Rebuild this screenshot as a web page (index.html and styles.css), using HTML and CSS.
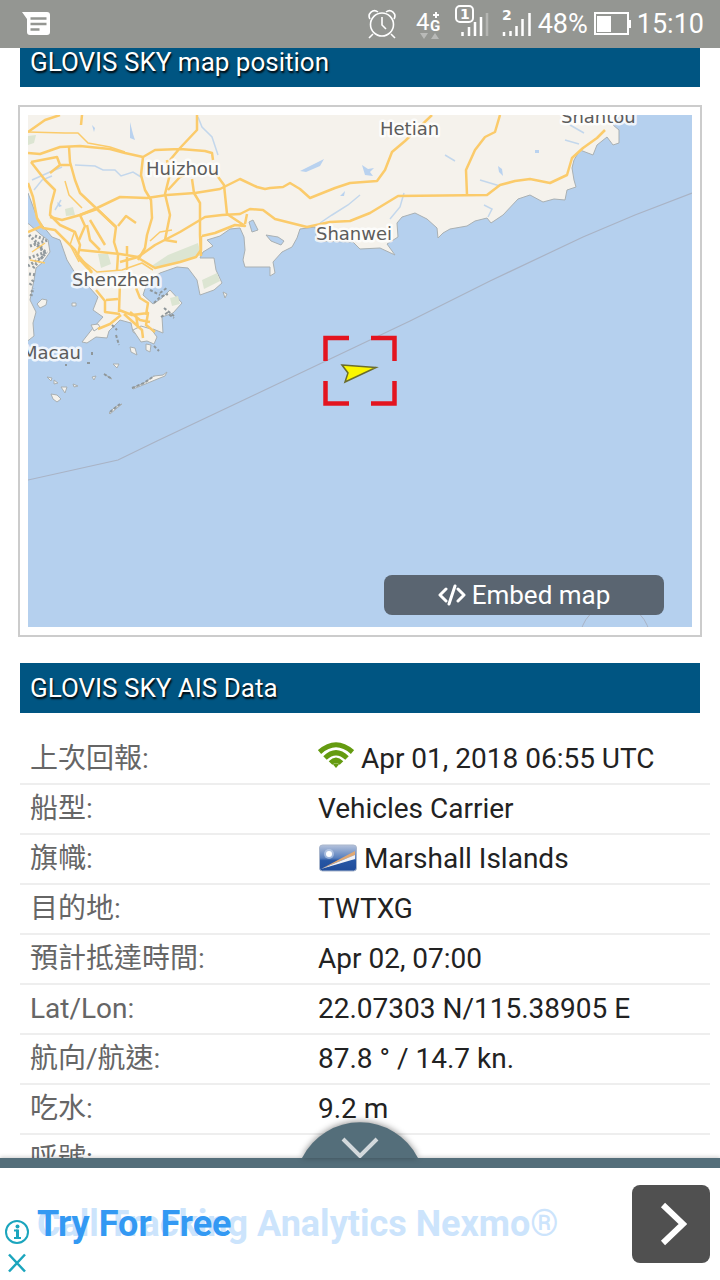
FILE: index.html
```html
<!DOCTYPE html>
<html lang="zh-Hant">
<head>
  <meta charset="UTF-8" />
  <meta name="viewport" content="width=device-width, initial-scale=1.0"/>
  <title>GLOVIS SKY</title>
  <link rel="stylesheet" href="styles.css">
</head>
<body>
  <header class="status-bar">
    <svg class="msg-icon" width="30" height="24" viewBox="0 0 30 24">
      <path d="M0 0h25q3 0 3 3v17q0 3-3 3H8q-3 0-3-3V7z" fill="#fff"/>
      <path d="M8.500 6.500h16M8.500 12h16M8.500 17.500h9" stroke="#949692" stroke-width="2.600"/>
    </svg>
    <svg class="alarm-icon" width="28" height="30" viewBox="0 0 28 30" fill="none" stroke="#fff" stroke-width="1.600">
      <circle cx="14" cy="15.500" r="11.500"/>
      <path d="M14 8v8l4 4M5 25l-4 4M23 25l4 4"/>
      <path d="M2 10C-1 5 5-1 10 3M26 10c3-5-3-11-8-7"/>
    </svg>
    <svg class="net-icon" width="28" height="32" viewBox="0 0 28 32">
      <text x="0" y="22" font-size="24" fill="#fff">4</text>
      <text x="14" y="23" font-size="15" font-weight="700" fill="#fff">G</text>
      <path d="M20 4v6M17 7h6" stroke="#fff" stroke-width="2"/>
      <path d="M4 25h8l-4 6zM15 31h8l-4-6z" fill="#b9bab8"/>
    </svg>
    <svg class="sim1-icon" width="34" height="34" viewBox="0 0 34 34">
      <rect x="1" y="2" width="17" height="16" rx="4" fill="none" stroke="#fff" stroke-width="2"/>
      <text x="5" y="15" font-size="14" font-weight="700" class="sim-no">1</text>
      <path d="M7.500 32v-4M14 32v-9M20 32V18M26 32V13" stroke="#fff" stroke-width="2.500"/>
      <path d="M32 32V9" stroke="#b4b5b2" stroke-width="2.500"/>
    </svg>
    <svg class="sim2-icon" width="30" height="34" viewBox="0 0 30 34">
      <text x="0" y="16" font-size="14" font-weight="700" class="sim-no">2</text>
      <path d="M2 32v-4M8.500 32v-5M14.500 32V22M20.500 32V15M27.500 32V9" stroke="#fff" stroke-width="2.500"/>
    </svg>
    <span class="percent">48%</span>
    <svg class="battery-icon" width="37" height="24" viewBox="0 0 37 24">
      <rect x="1" y="1" width="33" height="21" fill="none" stroke="#fff" stroke-width="2"/>
      <path d="M3 4h14v16H3zM34 8h3v8h-3z" fill="#fff"/>
    </svg>
    <span>15:10</span>
  </header>

  <main class="content">
    <h2 class="section-title first">GLOVIS SKY map position</h2>

    <div class="map-frame">
      <svg class="map" viewBox="28 115 664 512">
        <rect x="28" y="115" width="664" height="512" fill="#b5d0ee"/>

        <!-- land -->
        <g fill="#f5f2ec" stroke="#a9b0b3" stroke-width="1">
          <path d="M20 100H632L613 125L619 130L619 143L613 145L607 137L597 145L593 155L580 150L574 160L572 168L574 180L576 187L567 190L565 200L554 199L543 202L530 195L518 199L503 215L491 223L487 218L475 221L467 226L450 229L443 233L438 238L437 228L427 219L415 213L402 217L397 223L398 237L387 244L395 255L380 248L360 249L353 242L317 241L315 227L300 229L297 238L292 247L282 252L273 262L275 273L270 276L270 267L245 267L243 260L245 250L244 237L240 228L230 229L220 236L207 240L213 246L203 252L200 258L214 258L216 270L222 283L214 290L200 295L197 280L188 268L177 267L160 273L147 283L143 295L153 304L162 298L170 290L182 303L173 313L162 317L163 333L153 329L155 340L143 338L133 332L131 323L120 320L109 331L107 338L96 337L87 343L82 342L93 328L103 317L93 310L98 297L90 288L75 273L67 260L60 240L52 237L38 220L28 193H20Z"/>
          <path d="M20 221L29 224L40 234L48 240L50 252L43 262L36 268L34 280L30 300L36 312L33 323L34 336L25 343Z"/>
          <path d="M133 330l8-4 10 3 6 8-3 7-7-3-6 1zM91 325l7-1 2 3-6 4zM37 304l5-5 5 1-1 5-6 3zM72 303h4v3h-4zM223 292l4 2-2 4zM113 364l6 0-2 4zM146 344l5 1-1 7-4-2z"/>
          <path d="M47 377l5 1-1 3zM54 380l4 3-4 1zM61 387l6 0-2 6zM73 384l5 2-4 1zM51 394l6 1 4 4-4 3-4-3zM92 377l4-1-2 4zM104 374l8 5zM130 347l5 1 2 7-6-3z"/>
          <path d="M132 388l12-5 10-7 9-1 4-3-2 4-10 4-12 5-10 4zM109 413l6-6 7-3-5 4-7 6z"/>
        </g>
        <g fill="#b5d0ee" stroke="#a9b0b3" stroke-width="1">
          <path d="M266 235l12 2 6 4-3 4-10-4zM249 222l4-2 5 10-6 2z"/>
        </g>
        <g fill="#dce5d2">
          <path d="M153 265l15-10 30-12 3 12-18 7-30 6zM98 254l10 0 3 10-10 4zM28 136l8-1-2 8-6 2zM65 209l8-2 2 8-9 1zM202 280l15-7 3 8-16 8zM170 298l8-2 2 8-8 2z"/>
        </g>
        <!-- tidal flats west of the estuary -->
        <path d="M29 235l14 14M30 246l18-6M29 258l17-6M33 268l12-14M29 274l7 1M30 285l4-6M35 236l9 3M31 296l2-8M34 243l13 10M28 266l16-10M38 246l8 8" stroke="#929a9e" stroke-width="3" stroke-dasharray="2 2" fill="none"/>
        <path d="M160 293l8-6M150 290l10 5M161 317l6-4 7 5M112 325l5 5M116 335l3 10M92 352v4M87 363h4M154 346l5 5M65 365h2M132 388l12-5 10-7M154 303l6-6 8-3M164 308l10 8M104 374l8 5M110 412l10-8" stroke="#8f979b" stroke-width="2" stroke-dasharray="3 2" fill="none"/>

        <!-- rivers and lakes -->
        <g fill="none" stroke="#c3d7ec" stroke-width="1.500">
          <path d="M198 117l4 10 10 10 6 18M75 165l20 1 8 4 12 0 6 6 12-4 8 5M32 180l18-8 12-5M34 190l8-10 10-4M55 210l6-10M390 219l10-12 4-14M320 223l12-8 16-10 12-10M445 155l10 6M484 205l8 4-4 8M565 140l14 4M480 180l20 6M570 125l14 8"/>
        </g>
        <path d="M130 122l3 12 2 6-5-2zM92 125l3 3-1 4zM300 171l14-7 10-5-4 7-14 6zM362 165l6 4 6-1-4 4 3 4-8-1zM340 196l5-5-1 5zM498 166l4 3 1 7-4-4zM535 150h4v3h-4zM57 202l5 4-3 1z" fill="#b9d2ef"/>

        <!-- roads -->
        <g class="roads minor">
          <path d="M28 132L65 133L78 133L88 143L110 147L125 152"/>
          <path d="M74 233L70 245L79 262M150 241L160 232L172 230M65 181L69 195L82 208M82 260L97 272L122 270L142 263L153 270"/>
          <path d="M30 260L45 263M32 252L45 243"/>
        </g>
        <g class="roads">
          <path d="M28 132L45 120L60 115"/>
          <path d="M28 153L40 154L60 147L80 146L110 149L125 153L143 157L155 150L180 149L205 151L212 153L213 160M82 115L81 125M197 115L197 130L180 148L170 160"/>
          <path d="M69 147L70 162L75 180L80 193L97 209L116 227L114 242L118 255L117 270M31 162L57 157L60 165L70 165M60 165L50 173M31 162L45 180L55 190L51 205L50 215L60 225L75 232L80 245L78 255L92 272"/>
          <path d="M28 183L33 197L37 218L43 228L55 230L65 240L75 250L80 260L92 273M28 232L42 226"/>
          <path d="M50 217L62 220L80 215L97 208L120 197L147 198L167 195L195 193L220 189L240 179L257 187L265 189L270 188L283 187L290 183L300 189L310 198L335 188L350 183L377 181L385 170L392 152L405 141L432 115"/>
          <path d="M143 157L141 175L145 190L151 200L152 218L147 235L145 248L138 260M167 160L169 178L165 194L170 215L165 240L177 242M168 190L180 177L190 173M192 179L194 193L200 203L200 235L201 256"/>
          <path d="M120 262L138 257L155 245L180 232L205 217L222 215L240 214L250 209L263 210L275 219L307 227L330 222L350 221L370 213L398 196L487 195L500 185L515 181L530 179L550 183L567 175L572 158L583 148L597 138L605 130"/>
          <path d="M202 236L215 233L235 225L245 226L227 214L224 185L213 170M245 224L247 214M201 236L201 250L196 257L180 262L155 268L140 259"/>
          <path d="M467 195L466 170L475 150L485 137L495 132L500 115"/>
          <path d="M80 250L100 252L120 254L138 257M118 226L126 216L136 223M116 227L96 208M87 225L90 240L100 250M127 246L127 270M97 209L80 215L85 226L79 240M105 245L90 220"/>
          <path d="M96 290L105 301L105 312L120 314M120 282L119 312M136 288L140 298L148 303L146 315M98 329L110 324L121 315M119 310L132 315L148 313L146 325L155 332M124 314L142 330L143 338M130 312L140 320L150 322M136 315L138 328M106 300L118 299"/>
        </g>

        <path d="M28 480L118 460L157 441L250 397L410 321L490 281L583 237L635 215L692 193" fill="none" stroke="#a9b3c5" stroke-width="1.200"/>
        <circle cx="615" cy="639" r="35" fill="none" stroke="#a9b3c5"/>

        <g class="place">
          <text x="380" y="135">Hetian</text>
          <text x="561" y="123">Shantou</text>
          <text x="146" y="175">Huizhou</text>
          <text x="316" y="240">Shanwei</text>
          <text x="72" y="286">Shenzhen</text>
          <text x="22" y="359">Macau</text>
        </g>

        <path d="M325.500 361V338H349M371 338H394.500V361M394.500 381V403.500H371M349 403.500H325.500V381" fill="none" stroke="#e3141f" stroke-width="4.500"/>
        <path d="M342 365L376 367.500L345 382L348 373Z" fill="#fbf600" stroke="#6b6d2c" stroke-width="1.500"/>
      </svg>
      <button class="embed">
        <svg width="28" height="22" viewBox="0 0 28 22" fill="none" stroke="#fff" stroke-width="3" stroke-linecap="round" stroke-linejoin="round">
          <path d="M8 5l-6 6 6 6M20 5l6 6-6 6M17 2l-6 18"/>
        </svg>
        Embed map
      </button>
    </div>

    <h2 class="section-title">GLOVIS SKY AIS Data</h2>

    <table class="ais">
      <tr>
        <th scope="row">上次回報:</th>
        <td>
          <svg class="wifi" width="36" height="26" viewBox="0 0 36 26" fill="none" stroke="#649b10" stroke-width="5">
            <path d="M1.500 10Q18-4.500 34.500 10M7 16Q18 5.500 29 16M12.500 21Q18 15.500 23.500 21"/>
            <path d="M15 22.500Q18 20 21 22.500L18 26z" fill="#649b10" stroke="none"/>
          </svg>
          Apr 01, 2018 06:55 UTC
        </td>
      </tr>
      <tr>
        <th scope="row">船型:</th>
        <td>Vehicles Carrier</td>
      </tr>
      <tr>
        <th scope="row">旗幟:</th>
        <td>
          <svg class="flag" width="39" height="28" viewBox="0 0 39 28">
            <defs>
              <linearGradient id="flagBlue" x1="0" y1="0" x2="0" y2="1">
                <stop offset="0" stop-color="#b4c2dc"/>
                <stop offset="0.500" stop-color="#587fbd"/>
                <stop offset="0.600" stop-color="#2656a4"/>
                <stop offset="1" stop-color="#1f4c9b"/>
              </linearGradient>
            </defs>
            <rect x="1.500" y="1" width="37" height="26" rx="3" fill="url(#flagBlue)" stroke="#a9b6cc"/>
            <path d="M3 25L37 7V11z" fill="#e0a873"/>
            <path d="M3 25L37 11V15z" fill="#f1f3f8"/>
            <circle cx="11" cy="10" r="5" fill="#d5e1f3" opacity="0.500"/>
            <circle cx="11" cy="10" r="3" fill="#fff"/>
          </svg>
          Marshall Islands
        </td>
      </tr>
      <tr>
        <th scope="row">目的地:</th>
        <td>TWTXG</td>
      </tr>
      <tr>
        <th scope="row">預計抵達時間:</th>
        <td>Apr 02, 07:00</td>
      </tr>
      <tr>
        <th scope="row">Lat/Lon:</th>
        <td>22.07303 N/115.38905 E</td>
      </tr>
      <tr>
        <th scope="row">航向/航速:</th>
        <td>87.8 ° / 14.7 kn.</td>
      </tr>
      <tr>
        <th scope="row">吃水:</th>
        <td>9.2 m</td>
      </tr>
      <tr>
        <th scope="row">呼號:</th>
        <td></td>
      </tr>
    </table>
  </main>

  <footer class="ad">
    <button class="collapse" aria-label="Collapse">
      <svg width="116" height="36" viewBox="0 0 116 36">
        <path d="M0 36A65 65 0 0 1 116 36z" fill="#546e7a"/>
        <path d="M41 17L58 34L75 17" fill="none" stroke="#d3d9dc" stroke-width="4"/>
      </svg>
    </button>
    <div class="ad-marks">
      <button aria-label="Ad info">
        <svg width="24" height="24" viewBox="0 0 24 24" fill="none" stroke="#1ba5bd" stroke-width="2">
          <circle cx="12" cy="12" r="11"/>
          <path d="M9 10.500h3.500M9 18h7" />
          <path d="M12.500 9.500v8.500" stroke-width="3"/>
          <circle cx="12.500" cy="6.500" r="2" fill="#1ba5bd" stroke="none"/>
        </svg>
      </button>
      <button aria-label="Close ad">
        <svg width="24" height="20" viewBox="0 0 24 20" fill="none" stroke="#1ba5bd" stroke-width="2.500">
          <path d="M4 1.500l16 17M20 1.500l-16 17"/>
        </svg>
      </button>
    </div>
    <a class="ad-text" href="#">
      <span class="fading">Call Tracking Analytics Nexmo®</span>
      <span class="current">Try For Free</span>
    </a>
    <button class="ad-go" aria-label="Open">
      <svg width="32" height="44" viewBox="0 0 32 44">
        <path d="M8 3L28 22L8 41" fill="none" stroke="#fff" stroke-width="6"/>
      </svg>
    </button>
  </footer>
</body>
</html>
```
FILE: styles.css
```css
* {
  box-sizing: border-box;
}
body {
  margin: 0;
  height: 100vh;
  display: flex;
  flex-direction: column;
  font-family: Roboto, "Noto Sans CJK TC", sans-serif;
  font-size: 28px;
  color: #222;
  background-color: #fff;
}
svg {
  display: block;
}
button {
  padding: 0;
  border: none;
  background: none;
  font: inherit;
  cursor: pointer;
}

/* status bar */
.status-bar {
  flex: none;
  height: 48px;
  padding: 0 16px 0 22px;
  display: flex;
  align-items: center;
  font-size: 27px;
  color: #fff;
  background-color: #949692;
}
.msg-icon {
  margin-right: auto;
}
.alarm-icon {
  margin-right: 20px;
}
.net-icon {
  margin-right: 11px;
}
.sim1-icon {
  margin-right: 13px;
}
.sim2-icon {
  margin-right: 6px;
}
.sim1-icon, .sim2-icon {
  margin-bottom: 6px;
}
.sim-no {
  font-family: "DejaVu Sans", sans-serif;
  fill: #fff;
}
.battery-icon {
  margin: 0 6px;
}

/* page */
.content {
  flex: 1;
  min-height: 0;
  overflow: hidden;
}
.section-title {
  margin: 26px 20px 21px;
  padding: 0 10px;
  font-size: 26px;
  font-weight: 400;
  line-height: 50px;
  color: #fff;
  background-color: #005582;
  text-shadow: 1px 2px 2px #000;
}
.section-title.first {
  margin-top: -11px;
  margin-bottom: 18px;
}
.map-frame {
  position: relative;
  margin: 0 18px;
  padding: 8px;
  border: 2px solid #ccc;
}
.map {
  width: 100%;
}
.roads path {
  fill: none;
  stroke: #fbcb6b;
  stroke-width: 2.5px;
  stroke-linejoin: round;
}
.roads.minor path {
  stroke-width: 1.5px;
}
.place text {
  font-family: "DejaVu Sans", sans-serif;
  font-size: 18px;
  fill: #5c5c5c;
  stroke: #fff;
  stroke-width: 5px;
  stroke-linejoin: round;
  stroke-opacity: 0.8;
  paint-order: stroke;
}
.embed {
  position: absolute;
  right: 36px;
  bottom: 20px;
  width: 280px;
  height: 40px;
  display: flex;
  align-items: center;
  justify-content: center;
  gap: 6px;
  font-size: 26px;
  color: #fff;
  background-color: #5a6571;
  border-radius: 8px;
}

/* ship data */
.ais {
  width: calc(100% - 30px);
  margin-left: 20px;
  border-collapse: collapse;
  table-layout: fixed;
}
.ais th, .ais td {
  height: 50px;
  padding: 0 0 0 10px;
  border-bottom: 2px solid #eee;
  line-height: 32px;
  text-align: left;
  white-space: nowrap;
}
.ais th {
  width: 288px;
  font-weight: 400;
  color: #666;
}
.wifi, .flag {
  display: inline-block;
}
.flag {
  vertical-align: -4px;
}

/* ad banner */
.ad {
  position: relative;
  flex: none;
  height: 122px;
  display: flex;
  align-items: center;
  padding: 0 10px 0 5px;
  border-top: 10px solid #546e7a;
  background-color: #fff;
  box-shadow: 0 -1px 4px rgba(0, 0, 0, 0.2);
}
.collapse {
  position: absolute;
  left: 50%;
  bottom: calc(100% + 10px);
  transform: translateX(-50%);
  filter: drop-shadow(0 -1px 3px rgba(0, 0, 0, 0.4));
}
.ad-marks {
  align-self: flex-end;
  display: grid;
  gap: 9px;
  padding-bottom: 7px;
}
.ad-text {
  flex: 1;
  display: grid;
  margin-left: 8px;
  font-size: 36px;
  font-weight: 700;
  white-space: nowrap;
  text-decoration: none;
}
.ad-text span {
  grid-area: 1 / 1;
}
.fading {
  color: #cce4fc;
}
.current {
  color: #3399f3;
}
.ad-go {
  width: 78px;
  height: 78px;
  display: flex;
  align-items: center;
  justify-content: center;
  background-color: #505050;
  border-radius: 8px;
}
```
